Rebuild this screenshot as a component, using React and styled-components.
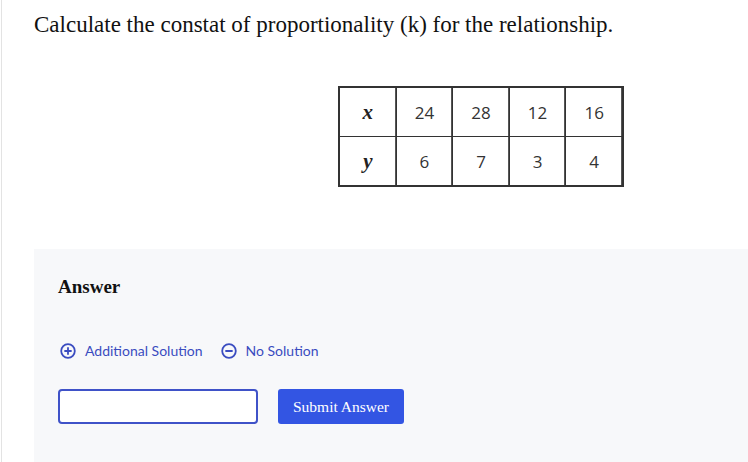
import React from "react";
import styled, { createGlobalStyle } from "styled-components";

const Global = createGlobalStyle`
  html, body { margin: 0; padding: 0; background: #fff; }
  body { width: 748px; height: 462px; overflow: hidden; }
`;

const Page = styled.div`
  margin-left: 1px;
  border-left: 1px solid #e3e3e3;
  height: 462px;
  box-sizing: border-box;
  display: flex;
  flex-direction: column;
`;

const Question = styled.div`
  padding: 10px 0 0 32px;
`;

const Title = styled.h1`
  margin: 0;
  font-family: "Liberation Serif", serif;
  font-weight: 400;
  font-size: 23px;
  line-height: 30px;
  color: #111;
`;

const Table = styled.div`
  margin: 46px 0 0 304px;
  width: 283px;
  display: grid;
  grid-template-columns: repeat(5, 1fr);
  border: 1px solid #333;
  border-width: 2px 1px 1px 2px;
`;

const Cell = styled.div`
  height: 48px;
  display: flex;
  align-items: center;
  justify-content: center;
  border-right: 1px solid #333;
  border-bottom: 1px solid #333;
  box-shadow: inset -1px 0 0 #555;
  font-family: "Open Sans", sans-serif;
  font-size: 17px;
  color: #333;
`;

const Var = styled.span`
  font-family: "Liberation Serif", serif;
  font-style: italic;
  font-weight: 700;
  font-size: 21px;
  color: #222;
`;

const AnswerPanel = styled.section`
  margin: 62px 0 0 32px;
  flex: 1;
  background: #f7f8fa;
  padding: 26px 0 0 24px;
`;

const AnswerTitle = styled.h2`
  margin: 0;
  font-family: "Liberation Serif", serif;
  font-weight: 700;
  font-size: 19px;
  line-height: 24px;
  color: #111;
`;

const Options = styled.div`
  display: flex;
  gap: 18px;
  margin-top: 43px;
  margin-left: 2px;
`;

const Option = styled.button`
  all: unset;
  display: flex;
  align-items: center;
  gap: 9px;
  font-family: Lato, sans-serif;
  font-size: 14px;
  color: #3a4cc0;
  cursor: pointer;
`;

const Controls = styled.div`
  display: flex;
  gap: 20px;
  margin-top: 30px;
`;

const Input = styled.input`
  width: 200px;
  height: 35px;
  box-sizing: border-box;
  border: 2px solid #3f52c8;
  border-radius: 4px;
  background: #fff;
  outline: none;
  padding: 0;
`;

const Submit = styled.button`
  height: 35px;
  width: 126px;
  border: none;
  border-radius: 3px;
  background: #3355e3;
  color: #fff;
  font-family: "Liberation Serif", serif;
  font-size: 15.5px;
  padding: 0;
`;

const PlusIcon = () => (
  <svg width="16" height="16" viewBox="0 0 16 16" fill="none" stroke="currentColor" strokeWidth="1.8" strokeLinecap="round">
    <circle cx="8" cy="8" r="6.8" />
    <path d="M8 5v6M5 8h6" />
  </svg>
);

const MinusIcon = () => (
  <svg width="16" height="16" viewBox="0 0 16 16" fill="none" stroke="currentColor" strokeWidth="1.8" strokeLinecap="round">
    <circle cx="8" cy="8" r="6.8" />
    <path d="M5 8h6" />
  </svg>
);

const xs = ["24", "28", "12", "16"];
const ys = ["6", "7", "3", "4"];

export default function App() {
  return (
    <>
      <Global />
      <Page>
        <Question>
          <Title>Calculate the constat of proportionality (k) for the relationship.</Title>
          <Table>
            <Cell><Var>x</Var></Cell>
            {xs.map((v) => <Cell key={"x" + v}>{v}</Cell>)}
            <Cell><Var>y</Var></Cell>
            {ys.map((v) => <Cell key={"y" + v}>{v}</Cell>)}
          </Table>
        </Question>
        <AnswerPanel>
          <AnswerTitle>Answer</AnswerTitle>
          <Options>
            <Option><PlusIcon />Additional Solution</Option>
            <Option><MinusIcon />No Solution</Option>
          </Options>
          <Controls>
            <Input />
            <Submit>Submit Answer</Submit>
          </Controls>
        </AnswerPanel>
      </Page>
    </>
  );
}
